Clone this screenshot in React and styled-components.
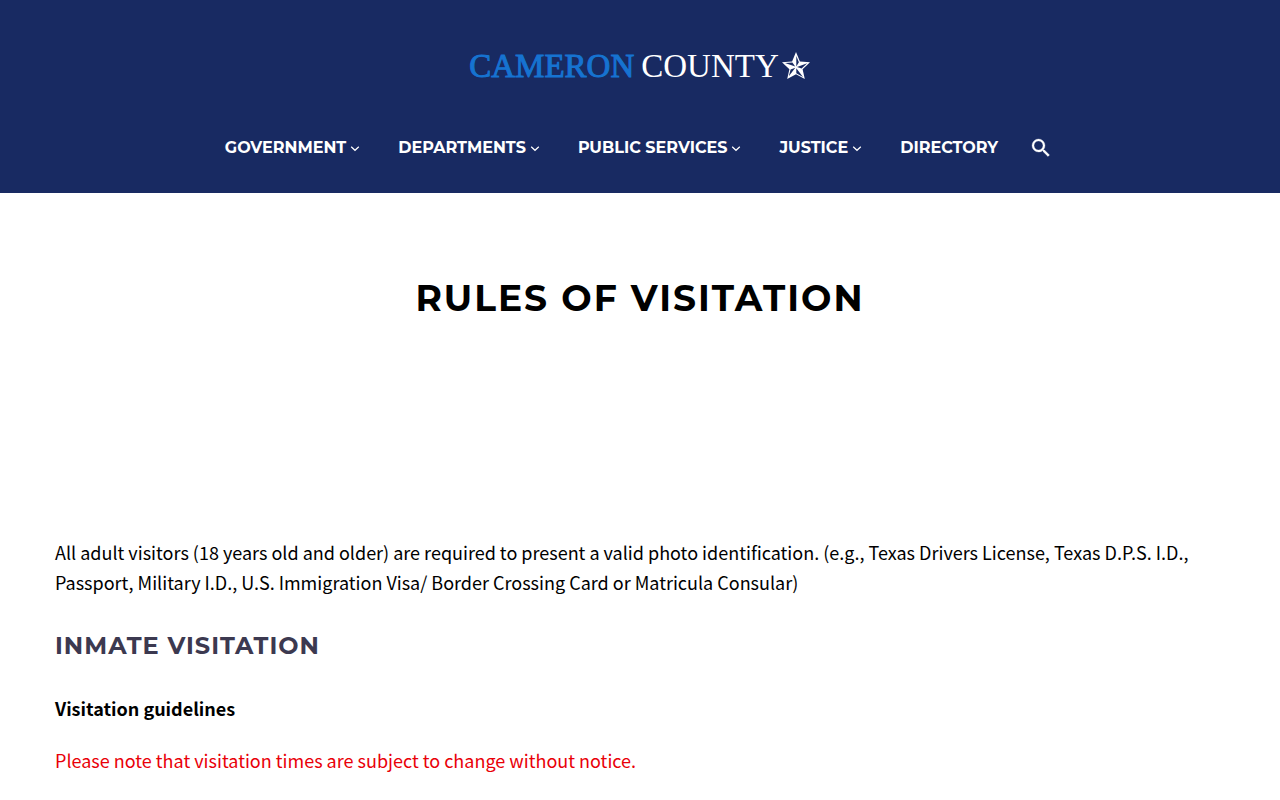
import React from "react";
import styled, { createGlobalStyle } from "styled-components";

const GlobalStyle = createGlobalStyle`
  * { box-sizing: border-box; }
  body {
    margin: 0;
    background: #fff;
    color: #000;
    font-family: "Source Sans Pro", "Noto Sans CJK SC", sans-serif;
    font-size: 18px;
    line-height: 30px;
  }
`;

const headingFont = `Montserrat, Inter, sans-serif`;

const Header = styled.header`
  display: flex;
  flex-direction: column;
  align-items: center;
  gap: 44px;
  padding: 43px 20px 30px;
  background: #182a62;
  color: #fff;
`;

const Logo = styled.a`
  display: flex;
  align-items: center;
  color: #fff;
  font-family: "Minion Pro", "Liberation Serif", serif;
  font-size: 33px;
  line-height: 46px;
  text-decoration: none;
`;

const LogoAccent = styled.span`
  margin-right: 7px;
  color: #1673d1;
  -webkit-text-stroke: 1px #1673d1;
`;

const Star = styled.svg`
  width: 30px;
  height: 30px;
  margin-left: 2px;
`;

const Nav = styled.nav`
  display: flex;
  align-items: center;
  gap: 38px;
  padding-right: 2px;
`;

const navItem = `
  display: flex;
  align-items: center;
  gap: 4px;
  padding: 0;
  border: 0;
  background: none;
  color: #fff;
  font: 700 16px/30px ${headingFont};
  text-transform: uppercase;
  text-decoration: none;
  white-space: nowrap;
  cursor: pointer;
`;

const MenuButton = styled.button`${navItem}`;
const MenuLink = styled.a`${navItem}`;

const SearchButton = styled.button`
  display: flex;
  margin-left: -7px;
  padding: 0;
  border: 0;
  background: none;
  color: #fff;
  cursor: pointer;
`;

const PageTitle = styled.h1`
  margin: 0;
  padding: 80px 20px 198px;
  font: 700 36px/50px ${headingFont};
  letter-spacing: 2px;
  text-align: center;
  text-transform: uppercase;
`;

const Content = styled.main`
  max-width: 1210px;
  margin: 0 auto;
  padding: 16px 20px 20px;
`;

const Paragraph = styled.p`
  margin: 0 0 22px;
  color: ${(p) => (p.$alert ? "#e90008" : "#000")};
`;

const SectionTitle = styled.h2`
  margin: 30px 0 28px;
  color: #3c3950;
  font: 700 24px/38px ${headingFont};
  letter-spacing: 1px;
  text-transform: uppercase;
`;

const Chevron = () => (
  <svg width="10" height="10" viewBox="0 0 10 10" aria-hidden="true">
    <path d="M1.2 3.7 L5 7.3 L8.8 3.7" fill="none" stroke="currentColor" strokeWidth="1.2" />
  </svg>
);

const MENU = [
  { label: "Government", sub: true },
  { label: "Departments", sub: true },
  { label: "Public Services", sub: true },
  { label: "Justice", sub: true },
  { label: "Directory" },
];

export default function App() {
  return (
    <>
      <GlobalStyle />
      <Header>
        <Logo href="#" aria-label="Cameron County">
          <LogoAccent>CAMERON</LogoAccent>
          <span>COUNTY</span>
          <Star viewBox="0 0 30 30" aria-hidden="true">
            <path
              d="M15 1 L18.9 10.6 L29 11.3 L21.6 18.2 L23.8 28 L15 23.2 L6.2 28 L8.4 18.2 L1 11.3 L11.1 10.6 Z"
              fill="#fff"
            />
            <path
              d="M15.3 5 L17.9 11.2 L15.3 15.4 Z M26.2 12.3 L20.6 17.4 L16 16 Z M22 26 L15.3 22.2 L15.3 17.2 Z M7.8 25.2 L9.6 18.6 L14.3 16.8 Z M4 12 L11.4 11.6 L14.2 15.6 Z"
              fill="#182a62"
            />
          </Star>
        </Logo>
        <Nav aria-label="Main">
          {MENU.map(({ label, sub }) =>
            sub ? (
              <MenuButton key={label} type="button" aria-haspopup="true">
                {label}
                <Chevron />
              </MenuButton>
            ) : (
              <MenuLink key={label} href="#">
                {label}
              </MenuLink>
            )
          )}
          <SearchButton type="button" aria-label="Search">
            <svg width="24" height="24" viewBox="0 0 24 24" aria-hidden="true">
              <path
                fill="currentColor"
                stroke="currentColor"
                strokeWidth="0.3"
                d="M15.5 14h-.79l-.28-.27A6.47 6.47 0 0 0 16 9.5 6.5 6.5 0 1 0 9.5 16c1.61 0 3.09-.59 4.23-1.57l.27.28v.79l5 4.99L20.49 19l-4.99-5zm-6 0C7.01 14 5 11.99 5 9.5S7.01 5 9.5 5 14 7.01 14 9.5 11.99 14 9.5 14z"
              />
            </svg>
          </SearchButton>
        </Nav>
      </Header>
      <PageTitle>Rules of Visitation</PageTitle>
      <Content>
        <Paragraph>
          All adult visitors (18 years old and older) are required to present a valid photo
          identification. (e.g., Texas Drivers License, Texas D.P.S. I.D., Passport, Military I.D.,
          U.S. Immigration Visa/ Border Crossing Card or Matricula Consular)
        </Paragraph>
        <SectionTitle>Inmate Visitation</SectionTitle>
        <Paragraph>
          <strong>Visitation guidelines</strong>
        </Paragraph>
        <Paragraph $alert>
          Please note that visitation times are subject to change without notice.
        </Paragraph>
      </Content>
    </>
  );
}
